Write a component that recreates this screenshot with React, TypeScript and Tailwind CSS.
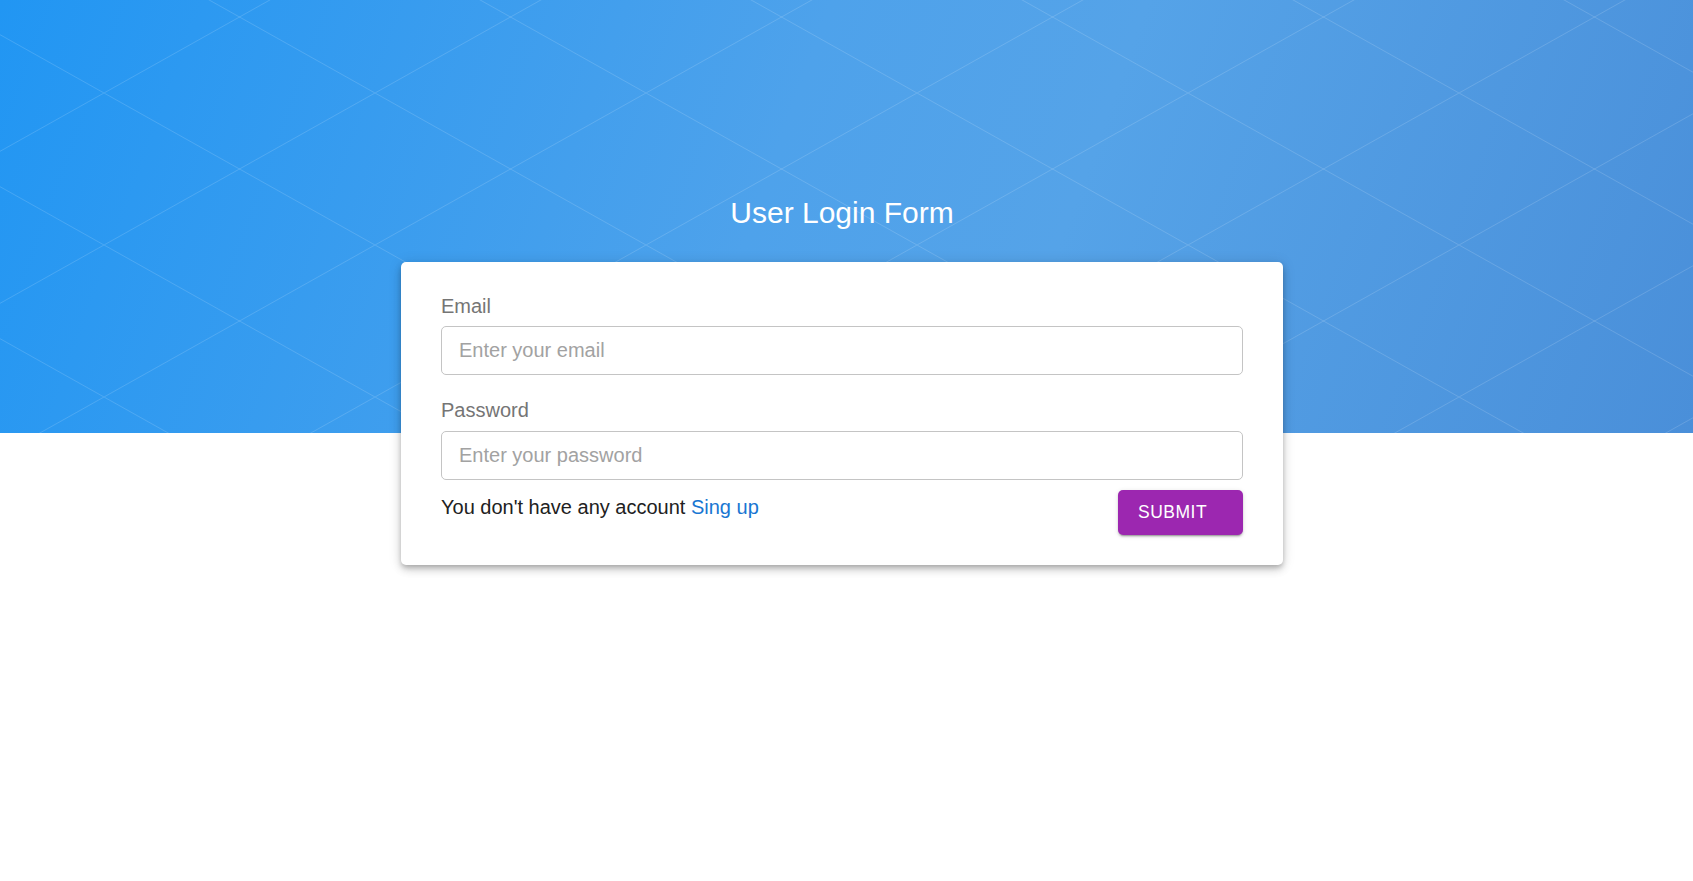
import React from "react";

export default function App() {
  return (
    <div className="min-h-[881px] w-full bg-white font-['Liberation_Sans',Arial,sans-serif]">
      <div className="relative h-[433px] w-full">
        <div className="absolute inset-0 overflow-hidden bg-[linear-gradient(110deg,#2196f3_0%,#4ea2eb_45%,#55a3e8_62%,#4a8fd9_100%)]">
          <svg className="absolute inset-0 h-full w-full" xmlns="http://www.w3.org/2000/svg">
            <defs>
              <pattern id="lat" x="104" y="93" width="271" height="152" patternUnits="userSpaceOnUse">
                <path d="M0 0L271 152M0 152L271 0" stroke="rgba(255,255,255,0.14)" strokeWidth="1" fill="none" />
              </pattern>
            </defs>
            <rect width="100%" height="100%" fill="url(#lat)" />
          </svg>
        </div>
        <div className="relative flex w-[1684px] flex-col items-center pt-[195px]">
          <h1 className="text-[30px] leading-[36px] font-normal text-white">User Login Form</h1>
          <div className="mt-[31px] w-[882px] rounded-[5px] bg-white px-[40px] pt-[29px] pb-[30px] shadow-[0_3px_5px_-1px_rgba(0,0,0,0.2),0_5px_8px_0_rgba(0,0,0,0.14),0_1px_14px_0_rgba(0,0,0,0.12)]">
            <label className="mb-[5px] block text-[20px] leading-[30px] text-[#757575]">Email</label>
            <input
              type="email"
              placeholder="Enter your email"
              className="block h-[49px] w-full rounded-[5px] border border-[#c4c4c4] bg-white px-[17px] text-[20px] text-[#212121] outline-none placeholder:text-[#a2a2a2]"
            />
            <label className="mt-[20px] mb-[6px] block text-[20px] leading-[30px] text-[#757575]">Password</label>
            <input
              type="password"
              placeholder="Enter your password"
              className="block h-[49px] w-full rounded-[5px] border border-[#c4c4c4] bg-white px-[17px] text-[20px] text-[#212121] outline-none placeholder:text-[#a2a2a2]"
            />
            <div className="mt-[10px] flex items-start justify-between">
              <p className="mt-[2px] text-[20px] leading-[30px] text-[#212121]">
                You don't have any account <a className="text-[#1976d2]">Sing up</a>
              </p>
              <button className="flex h-[45px] w-[125px] items-center justify-start rounded-[5px] bg-[#9c27b0] pl-[20px] text-[17.5px] uppercase tracking-[0.5px] text-white shadow-[0_3px_1px_-2px_rgba(0,0,0,0.2),0_2px_2px_0_rgba(0,0,0,0.14),0_1px_5px_0_rgba(0,0,0,0.12)]">
                Submit
              </button>
            </div>
          </div>
        </div>
      </div>
    </div>
  );
}
